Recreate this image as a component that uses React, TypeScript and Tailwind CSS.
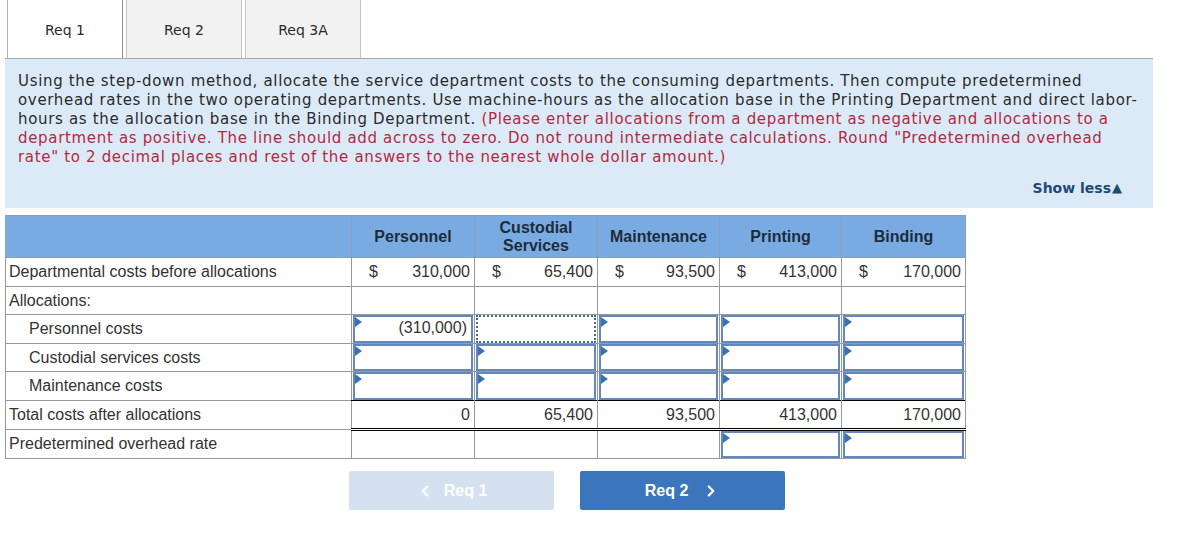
import { ChevronLeft, ChevronRight } from "lucide-react";

const cols = ["Personnel", "Custodial Services", "Maintenance", "Printing", "Binding"];
const before = ["310,000", "65,400", "93,500", "413,000", "170,000"];
const totals = ["0", "65,400", "93,500", "413,000", "170,000"];

const InputCell = ({ value = "", h = "h-[29px]" }: { value?: string; h?: string }) => (
  <td className={`border border-[#999] p-0 ${h}`}>
    <div className="relative mx-px h-full border-2 border-[#6189bd] bg-white pr-[4px] text-right leading-[22px]">
      <span className="absolute left-0 top-0 h-0 w-0 border-y-[5px] border-l-[7px] border-y-transparent border-l-[#3d70b0]" />
      {value}
    </div>
  </td>
);

const DottedCell = () => (
  <td className="border border-[#999] p-0 h-[29px]">
    <div className="mx-px h-full border-2 border-dotted border-[#3b6ea8]" />
  </td>
);

const PlainCell = ({ value = "", className = "" }: { value?: string; className?: string }) => (
  <td className={`border border-[#999] pr-[4px] text-right ${className}`}>{value}</td>
);

const Label = ({ text, indent = false, className = "" }: { text: string; indent?: boolean; className?: string }) => (
  <td className={`border border-[#999] ${indent ? "pl-[23px]" : "pl-[3px]"} ${className}`}>{text}</td>
);

export default function App() {
  return (
    <div className="h-[536px] w-[1190px] bg-white font-['DejaVu_Sans',Verdana,sans-serif] text-[#2b2b2b]">
      {/* Tabs */}
      <div className="flex gap-[3px] pl-[7px]">
        <div className="flex h-[58px] w-[116px] items-center justify-center border-x border-[#b5b5b5] border-r-[#8f8f8f] bg-white pt-[2px] text-[14px]">
          Req 1
        </div>
        <div className="flex h-[58px] w-[116px] items-center justify-center border-x border-[#c4c4c4] bg-[#f2f2f2] pt-[2px] text-[14px]">
          Req 2
        </div>
        <div className="flex h-[58px] w-[116px] items-center justify-center border-x border-[#c4c4c4] bg-[#f2f2f2] pt-[2px] text-[14px]">
          Req 3A
        </div>
      </div>

      {/* Instructions */}
      <div className="mx-[5px] h-[150px] w-[1148px] border-t border-[#a8a8a8] bg-[#dceaf8] pl-[13px] pr-[31px] pt-[13px]">
        <p className="whitespace-nowrap text-[15px] leading-[19px] tracking-[0.67px]">
          Using the step-down method, allocate the service department costs to the consuming departments. Then compute predetermined
          <br />
          overhead rates in the two operating departments. Use machine-hours as the allocation base in the Printing Department and direct labor-
          <br />
          hours as the allocation base in the Binding Department.{" "}
          <span className="text-[#b12a3e]">
            (Please enter allocations from a department as negative and allocations to a
            <br />
            department as positive. The line should add across to zero. Do not round intermediate calculations. Round "Predetermined overhead
            <br />
            rate" to 2 decimal places and rest of the answers to the nearest whole dollar amount.)
          </span>
        </p>
        <div className="mt-[11px] flex justify-end text-[14px] font-bold text-[#1f4a78]">
          Show less<span className="ml-[1px] text-[13px]">▲</span>
        </div>
      </div>

      {/* Table */}
      <div className="ml-[5px] mt-[7px] font-['Liberation_Sans',Arial,sans-serif] text-[16px] text-[#333]">
        <table className="w-[960px] table-fixed border-collapse">
          <colgroup>
            <col className="w-[346px]" />
            <col className="w-[123px]" />
            <col className="w-[123px]" />
            <col className="w-[122px]" />
            <col className="w-[122px]" />
            <col className="w-[124px]" />
          </colgroup>
          <thead>
            <tr className="h-[42px] bg-[#79abe2]">
              <th className="border border-[#8a9fb8]" />
              {cols.map((c) => (
                <th
                  key={c}
                  className="border border-[#8a9fb8] px-1 text-center text-[16px] font-bold leading-[18px] text-[#1d2b3a]"
                >
                  {c === "Custodial Services" ? (
                    <>
                      Custodial
                      <br />
                      Services
                    </>
                  ) : (
                    c
                  )}
                </th>
              ))}
            </tr>
          </thead>
          <tbody>
            <tr className="h-[29px]">
              <Label text="Departmental costs before allocations" />
              {before.map((v) => (
                <td key={v} className="border border-[#999] pl-[17px] pr-[4px]">
                  <div className="flex justify-between">
                    <span>$</span>
                    <span>{v}</span>
                  </div>
                </td>
              ))}
            </tr>
            <tr className="h-[28px]">
              <Label text="Allocations:" />
              <PlainCell />
              <PlainCell />
              <PlainCell />
              <PlainCell />
              <PlainCell />
            </tr>
            <tr className="h-[29px]">
              <Label text="Personnel costs" indent />
              <InputCell value="(310,000)" />
              <DottedCell />
              <InputCell />
              <InputCell />
              <InputCell />
            </tr>
            <tr className="h-[28px]">
              <Label text="Custodial services costs" indent />
              <InputCell h="h-[28px]" />
              <InputCell h="h-[28px]" />
              <InputCell h="h-[28px]" />
              <InputCell h="h-[28px]" />
              <InputCell h="h-[28px]" />
            </tr>
            <tr className="h-[29px]">
              <Label text="Maintenance costs" indent />
              <InputCell />
              <InputCell />
              <InputCell />
              <InputCell />
              <InputCell />
            </tr>
            <tr className="h-[29px]">
              <Label text="Total costs after allocations" className="border-t-black" />
              {totals.map((v, i) => (
                <PlainCell
                  key={i}
                  value={v}
                  className="border-t-black border-b-[3px] border-b-black border-double"
                />
              ))}
            </tr>
            <tr className="h-[29px]">
              <Label text="Predetermined overhead rate" />
              <PlainCell />
              <PlainCell />
              <PlainCell />
              <InputCell />
              <InputCell />
            </tr>
          </tbody>
        </table>

        {/* Nav buttons */}
        <div className="mt-[12px] flex gap-[26px] pl-[344px]">
          <button className="flex h-[39px] w-[205px] items-center justify-center gap-[10px] rounded-[2px] bg-[#d5e1f1] text-[16px] font-bold text-white">
            <ChevronLeft size={18} strokeWidth={3} />
            Req 1
          </button>
          <button className="flex h-[39px] w-[205px] items-center justify-center gap-[14px] rounded-[2px] bg-[#3b76bd] text-[16px] font-bold text-white">
            Req 2
            <ChevronRight size={18} strokeWidth={3} />
          </button>
        </div>
      </div>
    </div>
  );
}
